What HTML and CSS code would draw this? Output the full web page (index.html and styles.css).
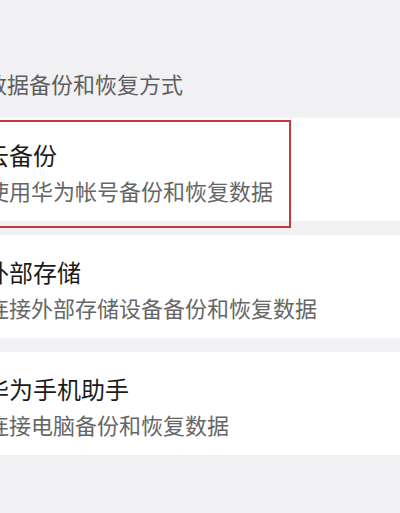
FILE: index.html
```html
<!DOCTYPE html>
<html lang="zh-CN">

<head>
  <meta charset="UTF-8">
  <meta name="viewport" content="width=device-width, initial-scale=1.0">
  <title>备份和恢复</title>
  <link rel="stylesheet" href="styles.css">
</head>

<body>
  <div id="page">
    <p class="section-title">数据备份和恢复方式</p>

    <div class="option selected">
      <div class="option-text">
        <div class="option-name">云备份</div>
        <div class="option-desc">使用华为帐号备份和恢复数据</div>
      </div>
      <div class="highlight"></div>
    </div>

    <div class="option">
      <div class="option-text">
        <div class="option-name">外部存储</div>
        <div class="option-desc">连接外部存储设备备份和恢复数据</div>
      </div>
    </div>

    <div class="option">
      <div class="option-text">
        <div class="option-name">华为手机助手</div>
        <div class="option-desc">连接电脑备份和恢复数据</div>
      </div>
    </div>
  </div>
</body>

</html>
```

FILE: styles.css
```css
body {
  margin: 0;
  background-color: #f1f1f3;
  font-family: 'Noto Sans CJK SC', 'Noto Sans', sans-serif;
  overflow: hidden;
}

#page {
  padding-top: 69px;
}

.section-title {
  margin: 0 0 21px -15px;
  font-size: 22px;
  line-height: 28px;
  color: #5f5f5f;
  white-space: nowrap;
}

.option {
  position: relative;
  height: 103px;
  margin-bottom: 14px;
  background-color: #fff;
  box-sizing: border-box;
  padding-top: 22px;
}

.option-text {
  margin-left: -15px;
  white-space: nowrap;
}

.option-name {
  font-size: 24px;
  line-height: 30px;
  color: #1b1b1b;
}

.option-desc {
  margin-top: 7px;
  margin-left: 2px;
  font-size: 22px;
  line-height: 26px;
  color: #666;
}

/* cadre rouge par-dessus la première option */
.highlight {
  position: absolute;
  top: 2px;
  left: -10px;
  width: 301px;
  height: 108px;
  border: 2px solid #c9353d;
  box-sizing: border-box;
}
```
